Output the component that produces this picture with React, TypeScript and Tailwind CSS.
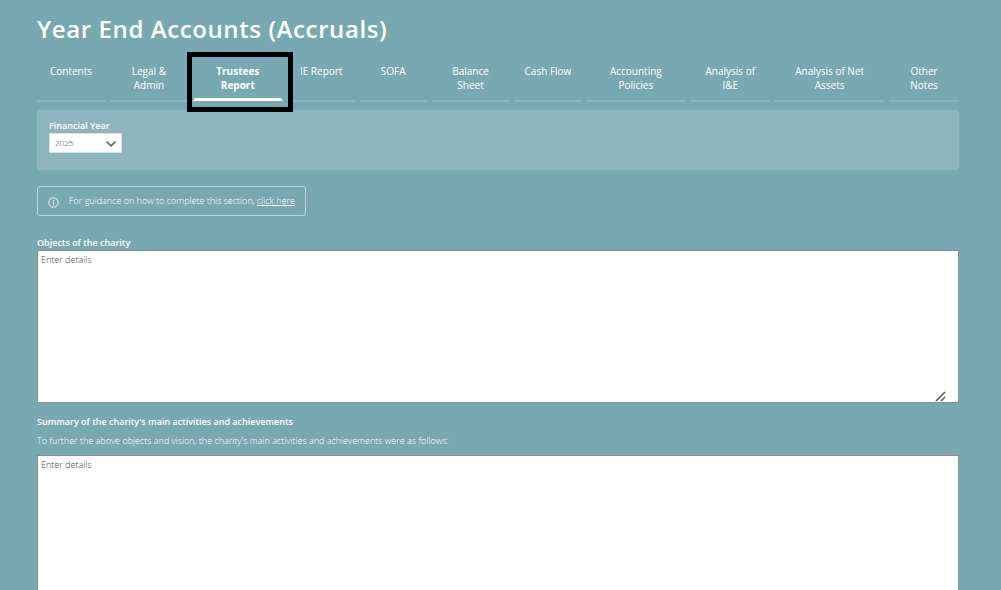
import { useState } from "react";

const tabs = [
  { label: "Contents", pad: "px-3" },
  { label: "Legal & Admin", pad: "px-4" },
  { label: "Trustees Report", pad: "px-4" },
  { label: "IE Report", pad: "px-2" },
  { label: "SOFA", pad: "px-2" },
  { label: "Balance Sheet", pad: "px-4" },
  { label: "Cash Flow", pad: "px-2" },
  { label: "Accounting Policies", pad: "px-4" },
  { label: "Analysis of I&E", pad: "px-3" },
  { label: "Analysis of Net Assets", pad: "px-4" },
  { label: "Other Notes", pad: "px-4" },
];

const currentTab = "Trustees Report";

function Tab({ label, pad }: { label: string; pad: string }) {
  const active = label === currentTab;
  return (
    <li className="relative flex">
      <a
        href="#"
        aria-current={active ? "page" : undefined}
        className={`flex h-[38px] w-full justify-center text-center text-[10px] leading-[14px] ${pad} ${
          active ? "font-bold" : "border-b-2 border-[#8bb5be]"
        }`}
      >
        {label}
      </a>
      {active && (
        <>
          <svg
            className="absolute inset-x-0 bottom-px h-[3px] w-full"
            viewBox="0 0 89 3"
            preserveAspectRatio="none"
            aria-hidden="true"
          >
            <path d="M2 0H87L89 3H0Z" fill="#fff" />
          </svg>
          <span className="pointer-events-none absolute -top-3 -right-[10px] -bottom-[10px] -left-[6px] z-10 border-5 border-black" />
        </>
      )}
    </li>
  );
}

function Details({ id, resizeGrip }: { id: string; resizeGrip?: boolean }) {
  const [value, setValue] = useState("");
  return (
    <div className="relative">
      <textarea
        id={id}
        value={value}
        onChange={(e) => setValue(e.target.value)}
        placeholder="Enter details"
        className="block h-[153px] w-full resize-none border border-[#8d8d8d] bg-white px-[3px] py-[3px] text-[9px] leading-3 font-light text-[#333] placeholder:text-[#444]"
      />
      {resizeGrip && (
        <svg
          className="pointer-events-none absolute right-[13px] bottom-[1px] size-[11px]"
          viewBox="0 0 11 11"
          fill="none"
          stroke="#555"
          strokeWidth="1.5"
          aria-hidden="true"
        >
          <path d="M1 10L10 1M6 10L10 6" />
        </svg>
      )}
    </div>
  );
}

export default function App() {
  const [year, setYear] = useState("2025");
  return (
    <main className="min-h-screen bg-[#78a9b3] pt-3 pr-[42px] pl-[37px] font-['Open_Sans',sans-serif] text-white">
      <h1 className="text-2xl leading-[34px] font-semibold tracking-wide">Year End Accounts (Accruals)</h1>

      <nav aria-label="Account sections" className="mt-[18px]">
        <ul className="grid grid-cols-[68fr_78fr_90fr_67fr_67fr_78fr_67fr_99fr_80fr_109fr_70fr] gap-x-[5px]">
          {tabs.map((tab) => (
            <Tab key={tab.label} label={tab.label} pad={tab.pad} />
          ))}
        </ul>
      </nav>

      <section className="mt-2 h-[60px] rounded-[3px] bg-[#8eb5bd] px-3 pt-[9px]">
        <label htmlFor="year" className="block text-[9px] leading-[14px] font-semibold">
          Financial Year
        </label>
        <div className="relative w-[73px]">
          <select
            id="year"
            value={year}
            onChange={(e) => setYear(e.target.value)}
            className="block h-5 w-full appearance-none border border-[#d5e3e6] bg-white pl-[5px] text-[8px] leading-3 font-light text-[#333]"
          >
            <option>2025</option>
            <option>2024</option>
            <option>2023</option>
          </select>
          <svg
            className="pointer-events-none absolute top-2 right-[6px] h-[6px] w-[10px]"
            viewBox="0 0 10 6"
            fill="none"
            stroke="#666"
            strokeWidth="1.7"
            aria-hidden="true"
          >
            <path d="M0.6 0.6L5 4.8L9.4 0.6" />
          </svg>
        </div>
      </section>

      <p className="mt-4 flex h-[30px] w-fit items-center gap-[10px] rounded-[3px] border border-[#bdd5da] px-[10px] text-[9px] leading-3 font-light">
        <svg className="mt-[2px] size-[11px]" viewBox="0 0 11 11" fill="none" stroke="#fff" aria-hidden="true">
          <circle cx="5.5" cy="5.5" r="4.7" strokeWidth="0.9" />
          <path d="M5.5 4.7V8.3M5.5 2.7V3.8" strokeWidth="1.1" />
        </svg>
        <span>
          For guidance on how to complete this section,{" "}
          <a href="#" className="underline">
            click here
          </a>
        </span>
      </p>

      <label htmlFor="objects" className="mt-5 block text-[9px] leading-[14px] font-semibold">
        Objects of the charity
      </label>
      <Details id="objects" resizeGrip />

      <label htmlFor="summary" className="mt-3 block text-[9px] leading-[14px] font-semibold">
        Summary of the charity's main activities and achievements
      </label>
      <p className="mt-[5px] mb-[7px] text-[9px] leading-[14px] font-light">
        To further the above objects and vision, the charity's main activities and achievements were as follows:
      </p>
      <Details id="summary" />
    </main>
  );
}
